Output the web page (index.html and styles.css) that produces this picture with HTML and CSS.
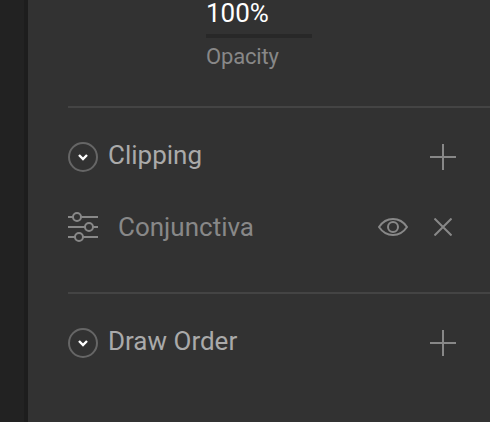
FILE: index.html
```html
<!DOCTYPE html>
<html lang="en">
<head>
    <meta charset="UTF-8">
    <meta name="viewport" content="width=device-width, initial-scale=1.0">
    <title>Inspector</title>
    <link rel="stylesheet" href="styles.css">
</head>
<body>
    <div class="gutter"></div>
    <main class="panel">
        <div class="field">
            <div class="field-value">100%</div>
            <div class="field-label">Opacity</div>
        </div>

        <section>
            <div class="section-header">
                <svg class="toggle" width="30" height="30" viewBox="0 0 30 30">
                    <circle cx="15" cy="15" r="14"/>
                    <path d="M11 13l4 4 4-4"/>
                </svg>
                <h2>Clipping</h2>
                <svg class="icon" width="26" height="26" viewBox="0 0 26 26">
                    <path d="M13 0v26M0 13h26"/>
                </svg>
            </div>
            <div class="item">
                <svg class="icon" width="30" height="30" viewBox="0 0 30 30">
                    <path d="M0 5h5M13 5h17M0 15h17M25 15h5M0 25h7M15 25h15"/>
                    <circle cx="9" cy="5" r="4"/>
                    <circle cx="21" cy="15" r="4"/>
                    <circle cx="11" cy="25" r="4"/>
                </svg>
                <span class="item-name">Conjunctiva</span>
                <svg class="icon eye" width="30" height="18" viewBox="0 0 30 18">
                    <path d="M1 9C4 4.500 9 1 15 1s11 3.500 14 8c-3 4.500-8 8-14 8S4 13.500 1 9z"/>
                    <circle cx="15" cy="9" r="5"/>
                </svg>
                <svg class="icon remove" width="18" height="18" viewBox="0 0 18 18">
                    <path d="M.5.5l17 17M17.500.5l-17 17"/>
                </svg>
            </div>
        </section>

        <section>
            <div class="section-header">
                <svg class="toggle" width="30" height="30" viewBox="0 0 30 30">
                    <circle cx="15" cy="15" r="14"/>
                    <path d="M11 13l4 4 4-4"/>
                </svg>
                <h2>Draw Order</h2>
                <svg class="icon" width="26" height="26" viewBox="0 0 26 26">
                    <path d="M13 0v26M0 13h26"/>
                </svg>
            </div>
        </section>
    </main>
</body>
</html>
```

FILE: styles.css
```css
* {
    box-sizing: border-box;
}
body {
    display: flex;
    height: 422px;
    margin: 0;
    overflow: hidden;
    background-color: #323232;
    font-family: Roboto, sans-serif;
    font-size: 26px;
    color: #888;
}
.gutter {
    width: 28px;
    background-color: #222;
    border-right: 4px solid #1d1d1d;
}
.panel {
    flex: 1;
    padding-left: 40px;
}
.field {
    width: 106px;
    height: 106px;
    margin-left: 138px;
}
.field-value {
    height: 38px;
    line-height: 26px;
    border-bottom: 4px solid #282828;
    color: #fff;
}
.field-label {
    padding-top: 5px;
    font-size: 22px;
    line-height: 28px;
    letter-spacing: -0.15px;
}
section {
    height: 186px;
    padding: 34px 34px 0 0;
    border-top: 2px solid #444;
}
section:last-child {
    height: auto;
}
.section-header, .item {
    display: flex;
    align-items: center;
    height: 30px;
}
.section-header h2 {
    flex: 1;
    margin: 0 0 4px 10px;
    font-size: 26px;
    font-weight: 400;
    line-height: 30px;
    color: #aaa;
}
.item {
    margin-top: 40px;
}
.item-name {
    flex: 1;
    margin-left: 20px;
    line-height: 30px;
}
svg {
    fill: none;
    stroke-width: 2;
}
.icon {
    stroke: #888;
}
.toggle {
    stroke: #666;
}
.toggle path {
    stroke: #fff;
    stroke-width: 2.4;
}
.remove {
    margin: 0 4px 0 26px;
}
```
